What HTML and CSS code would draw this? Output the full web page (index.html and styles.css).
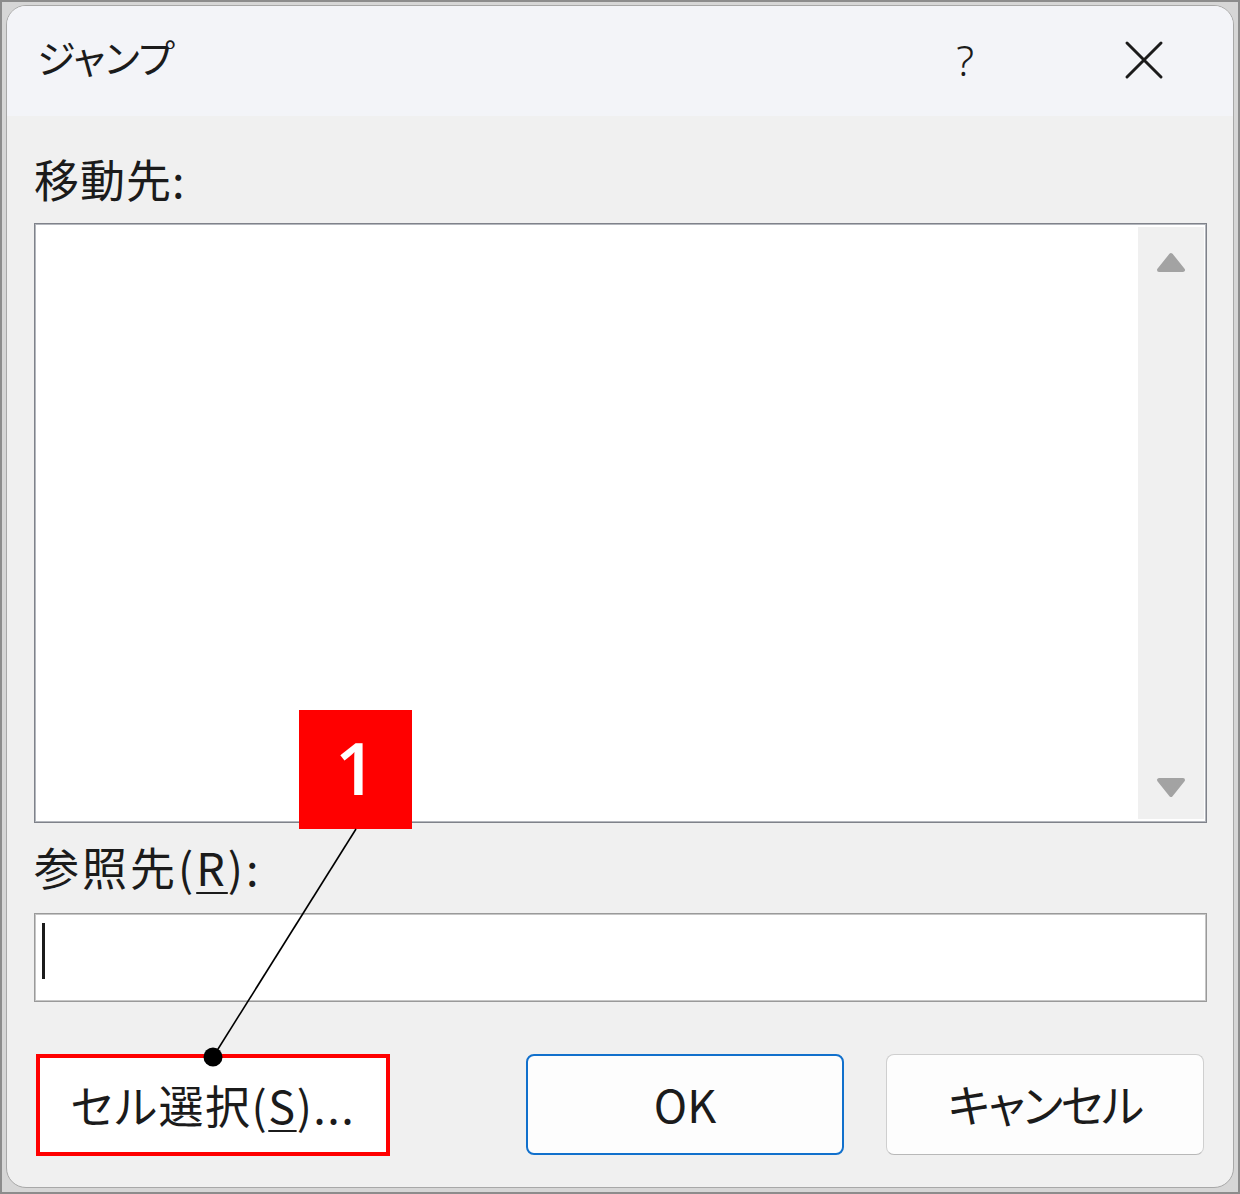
FILE: index.html
```html
<!DOCTYPE html>
<html lang="ja">
<head>
<meta charset="utf-8">
<title>ジャンプ</title>
<link rel="stylesheet" href="styles.css">
</head>
<body>
<div class="frame">
  <div class="window">
    <div class="titlebar">
      <div class="title">ジャンプ</div>
      <div class="title-actions">
        <span class="help">?</span>
        <svg class="close" width="40" height="40" viewBox="0 0 40 40"><path d="M3 3 L37 37 M37 3 L3 37" stroke="#1b1b1b" stroke-width="3" stroke-linecap="round"/></svg>
      </div>
    </div>
    <div class="content">
      <div class="label label-goto">移動先:</div>
      <div class="listbox">
        <div class="list-area"></div>
        <div class="scrollbar">
          <svg width="30" height="22" viewBox="0 0 30 22"><polygon points="15,3 27,18 3,18" fill="#a3a3a3" stroke="#a3a3a3" stroke-width="4" stroke-linejoin="round"/></svg>
          <svg width="30" height="22" viewBox="0 0 30 22"><polygon points="3,4 27,4 15,19" fill="#a3a3a3" stroke="#a3a3a3" stroke-width="4" stroke-linejoin="round"/></svg>
        </div>
      </div>
      <div class="label label-ref">参照先(<u>R</u>):</div>
      <div class="textbox"><span class="caret"></span></div>
      <div class="buttons">
        <div class="btn btn-select">セル選択(<u>S</u>)...</div>
        <div class="btn-group">
          <div class="btn btn-ok">OK</div>
          <div class="btn btn-cancel">キャンセル</div>
        </div>
      </div>
    </div>
  </div>
  <div class="badge">1</div>
  <svg class="leader" width="1240" height="1194" viewBox="0 0 1240 1194">
    <line x1="356" y1="829" x2="213" y2="1057" stroke="#000" stroke-width="1.6"/>
    <circle cx="213" cy="1057" r="9.5" fill="#000"/>
  </svg>
</div>
</body>
</html>
```
FILE: styles.css
```css
html, body {
  margin: 0;
  padding: 0;
}
body {
  font-family: "Noto Sans CJK JP", "Noto Sans", sans-serif;
  color: #1b1b1b;
}
.frame {
  position: relative;
  width: 1240px;
  height: 1194px;
  box-sizing: border-box;
  border: 2px solid #8c8c8c;
  background: #d6d6d6;
  padding: 3px 4px 4px 4px;
  display: flex;
}
.window {
  flex: 1;
  border: 1px solid #a8a8a8;
  border-radius: 20px;
  background: #f0f0f0;
  overflow: hidden;
  display: flex;
  flex-direction: column;
}
.titlebar {
  height: 110px;
  background: #f3f4f8;
  display: flex;
  align-items: center;
  justify-content: space-between;
  padding: 0 0 10px 30px;
  box-sizing: border-box;
  flex-shrink: 0;
}
.title {
  font-size: 39px;
  line-height: 1;
  font-feature-settings: "palt";
}
.title-actions {
  display: flex;
  align-items: center;
  padding-right: 69px;
}
.help {
  font-family: "Noto Sans", sans-serif;
  font-size: 42px;
  font-weight: 300;
  line-height: 1;
  color: #1b1b1b;
  margin-right: 150px;
  margin-top: 8px;
}
.close {
  display: block;
  margin-top: 8px;
}
.content {
  padding: 0 26px 0 27px;
  display: flex;
  flex-direction: column;
}
.label {
  font-size: 45px;
  line-height: 54px;
  height: 54px;
  font-feature-settings: "palt";
  letter-spacing: 1px;
}
.label u {
  text-underline-offset: 6px;
  text-decoration-thickness: 2px;
}
.label-goto {
  margin-top: 36px;
}
.listbox {
  margin-top: 17px;
  height: 600px;
  box-sizing: border-box;
  border: 1px solid #7f828a;
  box-shadow: inset 0 0 0 1px #b4b7bd;
  background: #fff;
  display: flex;
  padding: 3px 2px 3px 1px;
}
.list-area {
  flex: 1;
}
.scrollbar {
  width: 66px;
  background: #f0f0f0;
  display: flex;
  flex-direction: column;
  align-items: center;
  justify-content: space-between;
  padding: 25px 0 21px;
  box-sizing: border-box;
}
.scrollbar svg {
  display: block;
}
.label-ref {
  margin-top: 17px;
  letter-spacing: 3px;
}
.textbox {
  margin-top: 19px;
  height: 89px;
  box-sizing: border-box;
  border: 1px solid #9a9a9a;
  box-shadow: inset 0 0 0 1px #c6c6c6;
  background: #fff;
  padding: 9px 0 0 7px;
}
.caret {
  display: block;
  width: 3px;
  height: 56px;
  background: #1b1b1b;
}
.buttons {
  margin-top: 52px;
  display: flex;
  justify-content: space-between;
  padding: 0 3px 0 2px;
}
.btn-group {
  display: flex;
  gap: 42px;
}
.btn {
  height: 101px;
  box-sizing: border-box;
  background: #fdfdfd;
  border-radius: 8px;
  display: flex;
  align-items: center;
  justify-content: center;
  font-size: 45px;
  font-feature-settings: "palt";
  line-height: 1;
  padding-bottom: 2px;
}
.btn u {
  text-underline-offset: 6px;
  text-decoration-thickness: 2px;
}
.btn-select {
  width: 354px;
  height: 102px;
  border: 4px solid #ff0000;
  border-radius: 0;
  background: #fff;
  letter-spacing: 1.5px;
}
.btn-ok {
  width: 318px;
  border: 2px solid #1170cc;
}
.btn-cancel {
  width: 318px;
  border: 1.5px solid #cfcfcf;
  border-bottom-color: #b8b8b8;
  letter-spacing: -2px;
}
.badge {
  position: absolute;
  left: 297px;
  top: 708px;
  width: 113px;
  height: 119px;
  background: #ff0000;
  color: #fff;
  font-family: "Open Sans", "Noto Sans", sans-serif;
  font-weight: 600;
  font-size: 72px;
  line-height: 1;
  display: flex;
  align-items: center;
  justify-content: center;
  padding-bottom: 6px;
  box-sizing: border-box;
}
.leader {
  position: absolute;
  left: -2px;
  top: -2px;
  pointer-events: none;
}
```
